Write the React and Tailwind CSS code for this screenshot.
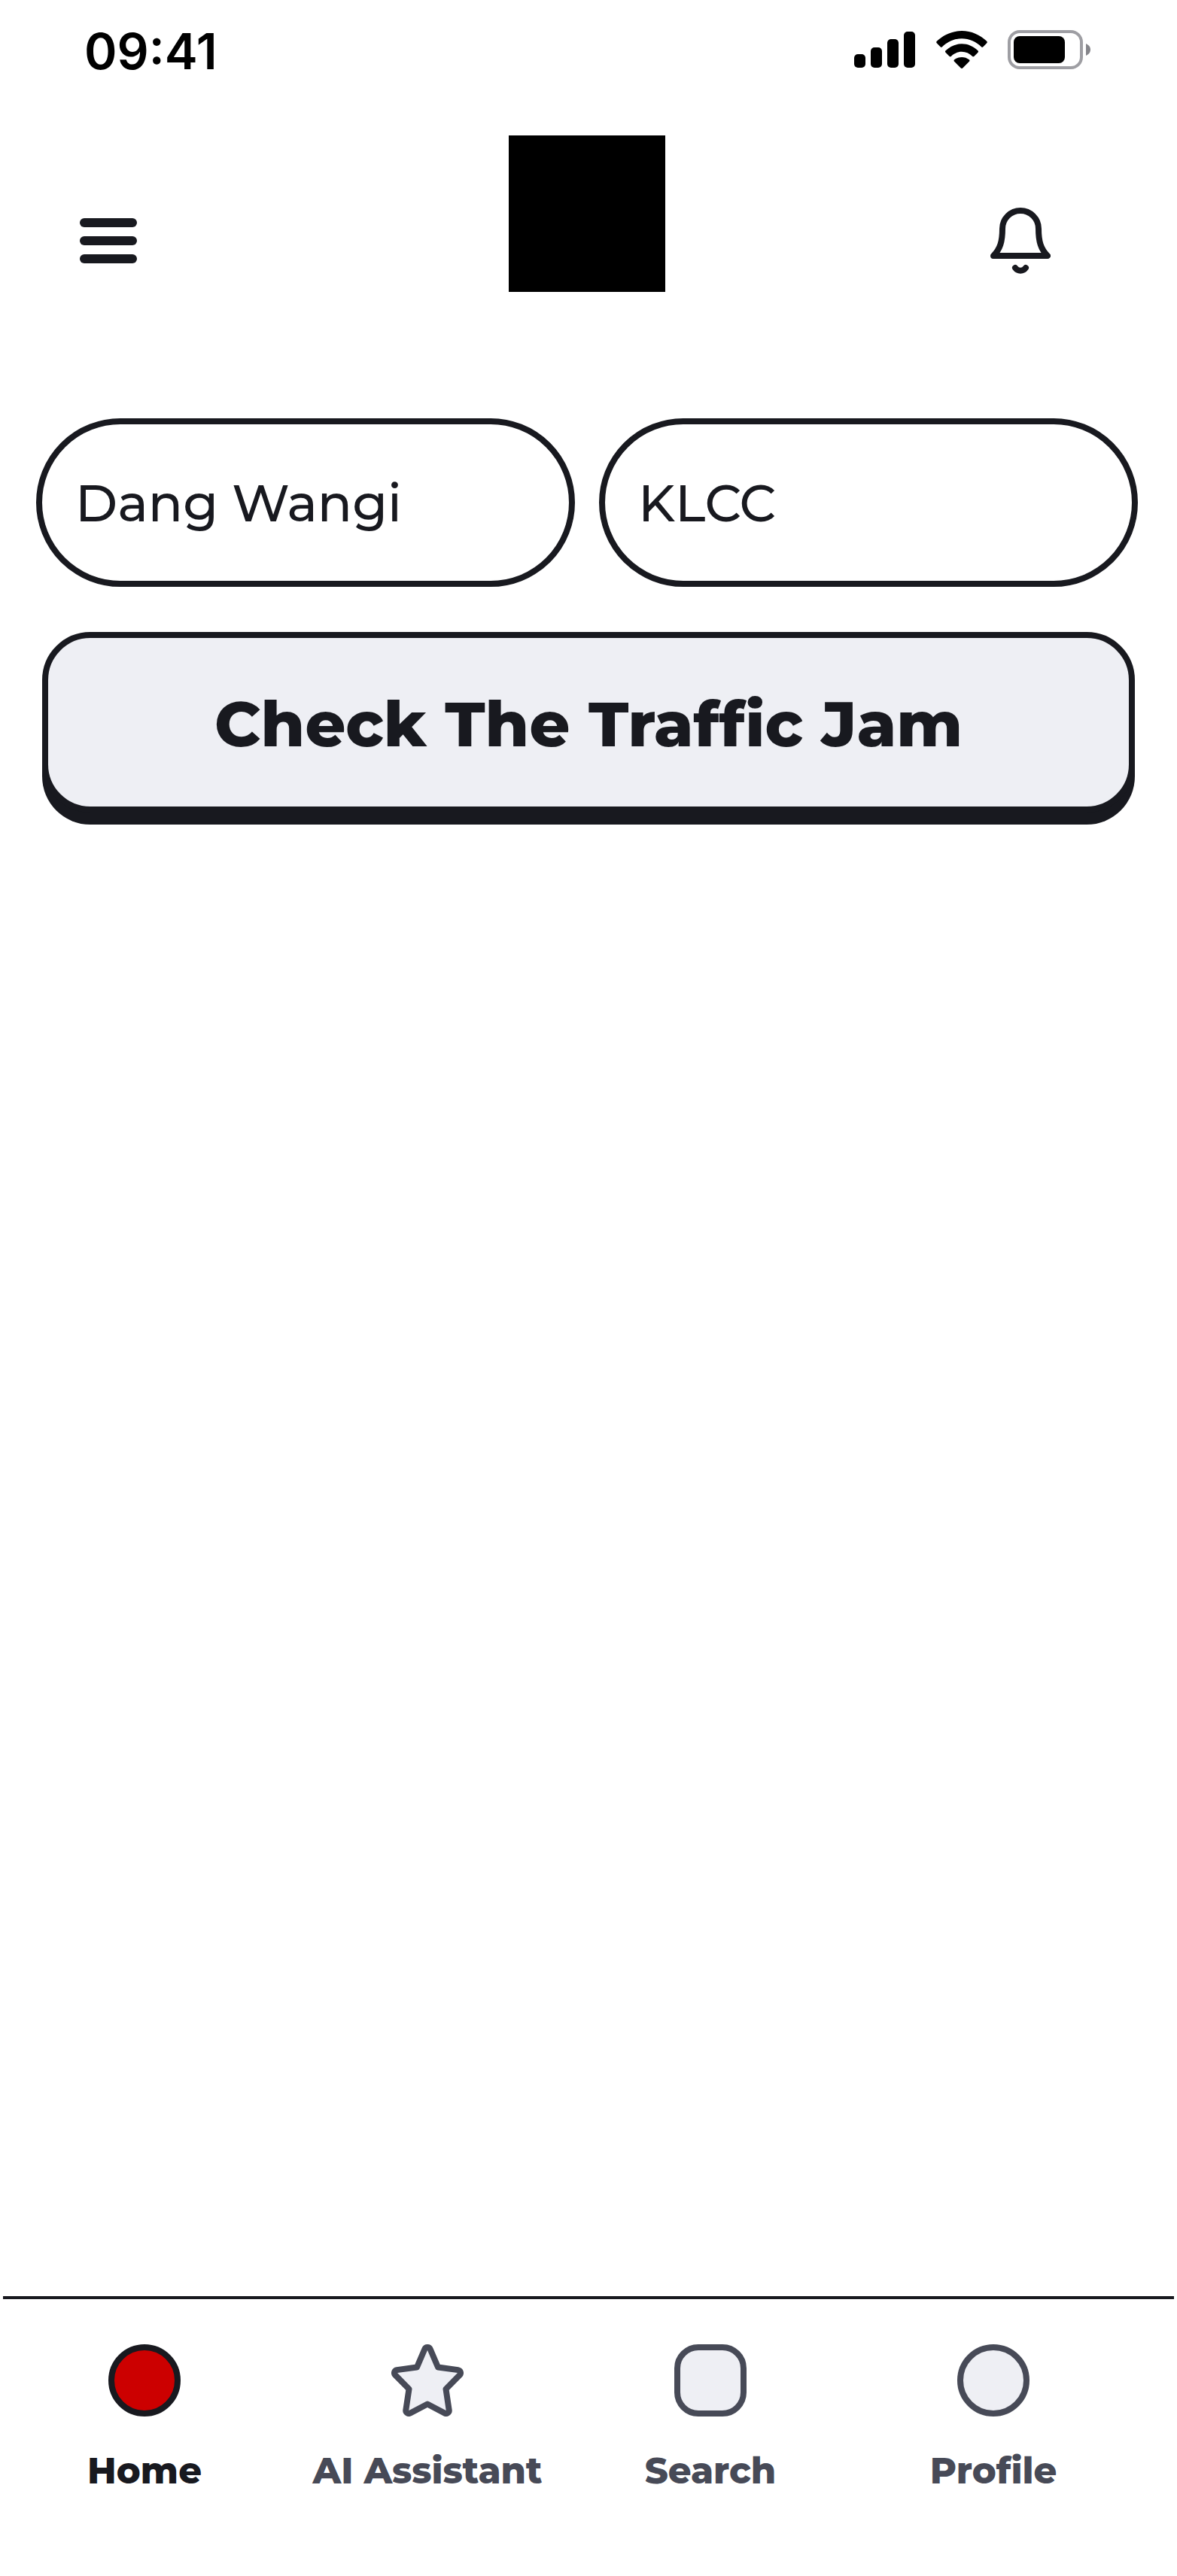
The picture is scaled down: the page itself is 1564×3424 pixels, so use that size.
import { useState } from "react";

function SignalIcon() {
    return (
        <svg width="82" height="50" viewBox="0 0 82 50" fill="#000000" aria-hidden="true">
            <rect x="0" y="31" width="15" height="18" rx="5" />
            <rect x="22" y="22" width="15" height="27" rx="5" />
            <rect x="44" y="11" width="15" height="38" rx="5" />
            <rect x="66" y="1" width="15" height="48" rx="5" />
        </svg>
    );
}

function WifiIcon() {
    return (
        <svg width="68" height="50" viewBox="0 0 68 50" fill="#000000" aria-hidden="true">
            <path d="M.8 13.7C9.800 5.200 21.400 0 34 0s24.200 5.200 33.200 13.700c.8.800.8 1.700.1 2.500l-4.900 5c-.8.800-1.600.8-2.400 0C53.200 14.600 44 10.300 34 10.300S14.800 14.600 8 21.200c-.8.800-1.600.8-2.400 0l-4.900-5c-.7-.8-.7-1.700.1-2.500z" />
            <path d="M12.600 26.300C18.400 20.700 25.800 17.300 34 17.300s15.600 3.400 21.400 9c.8.800.8 1.600.1 2.400l-5 5c-.8.800-1.600.8-2.500 0-3.800-3.600-8.600-5.900-14-5.900s-10.200 2.300-14 5.900c-.9.800-1.700.8-2.500 0l-5-5c-.7-.8-.7-1.600.1-2.400z" />
            <path d="M24.200 38.300C27 36.100 30.300 34.900 34 34.900s7 1.200 9.800 3.400c.9.700.9 1.700.1 2.500l-8.700 8.700c-.8.700-1.600.7-2.400 0l-8.700-8.700c-.8-.8-.8-1.800.1-2.500z" />
        </svg>
    );
}

function BatteryIcon() {
    return (
        <svg width="111" height="52" viewBox="0 0 111 52" aria-hidden="true">
            <rect x="2" y="2" width="96" height="48" rx="14" fill="none" stroke="#9e9ea3" strokeWidth="4" />
            <rect x="8" y="8" width="68" height="36" rx="8" fill="#000000" />
            <path d="M104 18c3.600 1.500 6 4.600 6 8s-2.400 6.500-6 8z" fill="#85858a" />
        </svg>
    );
}

function BellIcon() {
    return (
        <svg
            width="80"
            height="88"
            viewBox="0 0 80 88"
            fill="none"
            stroke="#18191f"
            strokeWidth="8"
            strokeLinecap="round"
            strokeLinejoin="round"
            aria-hidden="true"
        >
            <path d="M16 28a24 24 0 0 1 48 0c0 17 3 27 12 36H4c9-9 12-19 12-36z" />
            <path d="M33 80c3.500 5 10.500 5 14 0" />
        </svg>
    );
}

function StarIcon() {
    return (
        <svg
            className="size-24"
            viewBox="0 0 96 96"
            fill="#eeeff4"
            stroke="#474a57"
            strokeWidth="8"
            strokeLinejoin="round"
            aria-hidden="true"
        >
            <path d="M44.300 6.500a4 4 0 0 1 7.400 0L62 30.500l26.600 3.600a4 4 0 0 1 2.200 6.800L72.500 59.500l4.200 28a4 4 0 0 1-5.900 4L48 79.500l-22.800 12a4 4 0 0 1-5.900-4l4.200-28L5.200 40.900a4 4 0 0 1 2.200-6.800L34 30.500z" />
        </svg>
    );
}

const tabs = [
    {
        key: "home",
        label: "Home",
        icon: <span className="size-24 rounded-full border-8 border-[#18191f] bg-[#cc0000]" />,
    },
    { key: "assistant", label: "AI Assistant", icon: <StarIcon /> },
    {
        key: "search",
        label: "Search",
        icon: <span className="size-24 rounded-[32px] border-8 border-[#474a57] bg-[#eeeff4]" />,
    },
    {
        key: "profile",
        label: "Profile",
        icon: <span className="size-24 rounded-full border-8 border-[#474a57] bg-[#eeeff4]" />,
    },
];

const inputClass =
    "h-56 w-full min-w-0 rounded-full border-8 border-[#18191f] bg-white px-11 text-[68px] font-medium text-[#18191f] outline-none";

export default function App() {
    const [origin, setOrigin] = useState("Dang Wangi");
    const [destination, setDestination] = useState("KLCC");

    return (
        <div className="flex min-h-screen flex-col bg-white font-['Montserrat','Inter',sans-serif] text-[#18191f]">
            {/* Status bar */}
            <div className="flex h-[132px] items-center justify-between pr-[114px] pl-28 text-black">
                <span className="pt-1 font-['Inter',sans-serif] text-[66px] font-semibold">09:41</span>
                <div className="flex items-center gap-[27px]">
                    <SignalIcon />
                    <WifiIcon />
                    <BatteryIcon />
                </div>
            </div>

            {/* Header */}
            <header className="grid grid-cols-[1fr_auto_1fr] items-end pt-12 pr-1">
                <div className="flex pl-[106px]">
                    <button
                        type="button"
                        aria-label="Menu"
                        className="flex h-[136px] w-[76px] flex-col justify-center gap-3"
                    >
                        <span className="h-3 w-full rounded-full bg-[#18191f]" />
                        <span className="h-3 w-full rounded-full bg-[#18191f]" />
                        <span className="h-3 w-full rounded-full bg-[#18191f]" />
                    </button>
                </div>
                <div className="size-52 bg-black" />
                <div className="flex justify-end pr-[164px]">
                    <button type="button" aria-label="Notifications" className="flex h-[136px] items-center">
                        <BellIcon />
                    </button>
                </div>
            </header>

            {/* Route form */}
            <main className="flex-1 pt-[168px]">
                <form onSubmit={(e) => e.preventDefault()}>
                    <div className="grid grid-cols-2 gap-8 pr-[52px] pl-12">
                        <input
                            type="text"
                            aria-label="From"
                            value={origin}
                            onChange={(e) => setOrigin(e.target.value)}
                            className={inputClass}
                        />
                        <input
                            type="text"
                            aria-label="To"
                            value={destination}
                            onChange={(e) => setDestination(e.target.value)}
                            className={inputClass}
                        />
                    </div>
                    <div className="px-14 pt-[60px]">
                        <button
                            type="submit"
                            className="h-60 w-full rounded-[64px] border-8 border-[#18191f] bg-[#eeeff4] pt-1 text-[84px] font-extrabold shadow-[0_16px_0_#18191f]"
                        >
                            Check The Traffic Jam
                        </button>
                    </div>
                </form>
            </main>

            {/* Bottom navigation */}
            <nav className="mx-1 h-[372px] border-t-4 border-[#18191f] pt-[60px] pr-[52px]">
                <div className="grid grid-cols-4">
                    {tabs.map((tab) => (
                        <a
                            key={tab.key}
                            href={`#${tab.key}`}
                            className={`flex flex-col items-center gap-10 text-5xl leading-[64px] font-extrabold whitespace-nowrap ${
                                tab.key === "home" ? "text-[#18191f]" : "text-[#474a57]"
                            }`}
                        >
                            {tab.icon}
                            <span>{tab.label}</span>
                        </a>
                    ))}
                </div>
            </nav>
        </div>
    );
}
